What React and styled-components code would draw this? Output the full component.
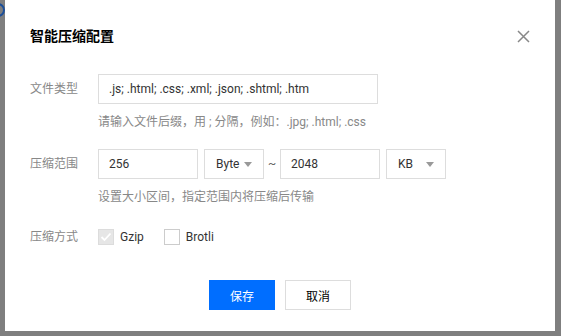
import React, { useState } from "react";
import styled, { createGlobalStyle } from "styled-components";

const GlobalStyle = createGlobalStyle`
  html, body {
    margin: 0;
    padding: 0;
    background: #7f7f7f;
    font-family: Roboto, "Noto Sans CJK SC", "Liberation Sans", sans-serif;
    overflow: hidden;
  }
`;

const Backdrop = styled.div`
  width: 561px;
  height: 336px;
  padding: 0 6px 0 5px;
  box-sizing: border-box;
  position: relative;
`;

const PageHint = styled.div`
  position: absolute;
  left: -9px;
  top: 3px;
  width: 10px;
  height: 10px;
  border-radius: 50%;
  border: 2px solid #1c4f9a;
`;

const Dialog = styled.div`
  width: 550px;
  height: 331px;
  background: #fff;
  box-sizing: border-box;
  padding: 26px 25px 0;
  position: relative;
`;

const Header = styled.div`
  display: flex;
  align-items: center;
  justify-content: space-between;
  height: 20px;
`;

const Title = styled.h3`
  margin: 0;
  font-size: 14px;
  font-weight: bold;
  color: #000;
  line-height: 20px;
`;

const Close = styled.button`
  width: 16px;
  height: 16px;
  padding: 0;
  border: 0;
  background: none;
  margin-right: -1px;
  display: flex;
  align-items: center;
  justify-content: center;
  cursor: pointer;
`;

const Form = styled.div`
  margin-top: 28px;
  display: flex;
  flex-direction: column;
`;

const Row = styled.div`
  display: flex;
  align-items: ${(p) => (p.top ? "flex-start" : "center")};
  margin-top: ${(p) => p.gap || 0}px;
`;

const Label = styled.div`
  width: 68px;
  flex-shrink: 0;
  font-size: 12px;
  color: #888;
  line-height: ${(p) => p.lh || 30}px;
`;

const Field = styled.div`
  display: flex;
  flex-direction: column;
`;

const Controls = styled.div`
  display: flex;
  align-items: center;
  gap: 6px;
`;

const Input = styled.input`
  box-sizing: border-box;
  width: ${(p) => p.w}px;
  height: 30px;
  border: 1px solid #dddddd;
  padding: 0 10px;
  font-family: inherit;
  font-size: 12px;
  color: #333;
  outline: none;
  background: #fff;
`;

const Hint = styled.div`
  margin-top: 9px;
  font-size: 12px;
  line-height: 18px;
  color: #888;
`;

const Select = styled.div`
  box-sizing: border-box;
  width: 60px;
  height: 30px;
  border: 1px solid #dddddd;
  display: flex;
  align-items: center;
  justify-content: space-between;
  padding: 0 11px 0 11px;
  font-size: 12px;
  color: #333;
`;

const Caret = styled.span`
  width: 0;
  height: 0;
  border-left: 4px solid transparent;
  border-right: 4px solid transparent;
  border-top: 5px solid #999;
`;

const Tilde = styled.span`
  width: 4px;
  flex-shrink: 0;
  display: flex;
  justify-content: center;
  font-size: 12px;
  color: #666;
`;

const Checks = styled.div`
  display: flex;
  align-items: center;
  gap: 20px;
  height: 18px;
`;

const CheckItem = styled.label`
  display: flex;
  align-items: center;
  gap: 6px;
  font-size: 12px;
  color: #333;
`;

const Box = styled.span`
  box-sizing: border-box;
  width: 16px;
  height: 16px;
  border: 1px solid ${(p) => (p.disabled ? "#dcdcdc" : "#cccccc")};
  background: ${(p) => (p.disabled ? "#e6e6e6" : "#fff")};
  display: flex;
  align-items: center;
  justify-content: center;
`;

const Footer = styled.div`
  display: flex;
  justify-content: center;
  gap: 10px;
  margin-top: 34px;
`;

const Button = styled.button`
  box-sizing: border-box;
  width: 66px;
  height: 30px;
  font-family: inherit;
  font-size: 12px;
  border: 1px solid ${(p) => (p.primary ? "#006eff" : "#dddddd")};
  background: ${(p) => (p.primary ? "#006eff" : "#fff")};
  color: ${(p) => (p.primary ? "#fff" : "#000")};
  cursor: pointer;
`;

const Checkbox = ({ checked, disabled, label }) => (
  <CheckItem>
    <Box disabled={disabled}>
      {checked && (
        <svg width="12" height="10" viewBox="0 0 12 10">
          <path d="M1.5 5 L4.5 8 L10.5 1.5" fill="none" stroke="#fff" strokeWidth="1.8" />
        </svg>
      )}
    </Box>
    {label}
  </CheckItem>
);

export default function App() {
  const [types, setTypes] = useState(".js; .html; .css; .xml; .json; .shtml; .htm");
  const [min, setMin] = useState("256");
  const [max, setMax] = useState("2048");

  return (
    <>
      <GlobalStyle />
      <Backdrop>
        <PageHint />
        <Dialog>
          <Header>
            <Title>智能压缩配置</Title>
            <Close aria-label="关闭">
              <svg width="13" height="13" viewBox="0 0 13 13">
                <path d="M1 1 L12 12 M12 1 L1 12" stroke="#888" strokeWidth="1.5" />
              </svg>
            </Close>
          </Header>
          <Form>
            <Row top>
              <Label>文件类型</Label>
              <Field>
                <Input w={280} value={types} onChange={(e) => setTypes(e.target.value)} />
                <Hint>请输入文件后缀，用 ; 分隔，例如：.jpg; .html; .css</Hint>
              </Field>
            </Row>
            <Row top gap={18}>
              <Label>压缩范围</Label>
              <Field>
                <Controls>
                  <Input w={100} value={min} onChange={(e) => setMin(e.target.value)} />
                  <Select>
                    Byte <Caret />
                  </Select>
                  <Tilde>~</Tilde>
                  <Input w={100} value={max} onChange={(e) => setMax(e.target.value)} />
                  <Select>
                    KB <Caret />
                  </Select>
                </Controls>
                <Hint>设置大小区间，指定范围内将压缩后传输</Hint>
              </Field>
            </Row>
            <Row gap={22}>
              <Label lh={18}>压缩方式</Label>
              <Checks>
                <Checkbox checked disabled label="Gzip" />
                <Checkbox label="Brotli" />
              </Checks>
            </Row>
          </Form>
          <Footer>
            <Button primary>保存</Button>
            <Button>取消</Button>
          </Footer>
        </Dialog>
      </Backdrop>
    </>
  );
}
